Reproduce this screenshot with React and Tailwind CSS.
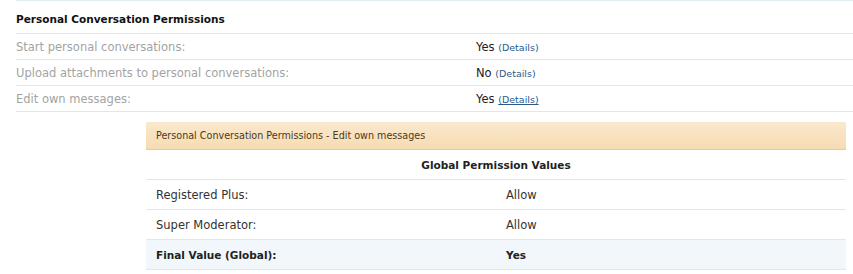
import React from 'react';

const rows = [
  { label: 'Start personal conversations:', value: 'Yes' },
  { label: 'Upload attachments to personal conversations:', value: 'No' },
  { label: 'Edit own messages:', value: 'Yes', hover: true },
];

const detailRows = [
  { label: 'Registered Plus:', value: 'Allow' },
  { label: 'Super Moderator:', value: 'Allow' },
];

export default function App() {
  return (
    <div className="w-[853px] h-[274px] bg-white overflow-hidden font-['DejaVu_Sans',sans-serif] text-[11.5px]">
      <div className="pl-4">
        <div className="border-t border-[#dfeef0] h-[1px]"></div>

        {/* Section heading */}
        <div className="h-[33px] flex items-end pb-[5px] border-b border-[#dbeaf0]">
          <span className="font-bold text-[#111] text-[10.5px]">Personal Conversation Permissions</span>
        </div>

        {/* Permission rows */}
        {rows.map((row) => (
          <div key={row.label} className="h-[26px] pt-[2px] flex items-center border-b border-[#dbeaf0]">
            <div className="w-[460px] text-[#a3a3a3]">{row.label}</div>
            <div className="text-[#222]">
              {row.value}{' '}
              <span className={`text-[9.5px] text-[#2b5a8a] ${row.hover ? 'underline' : ''}`}>(Details)</span>
            </div>
          </div>
        ))}

        {/* Detail panel */}
        <div className="ml-[130px] mr-[7px] mt-[10px]">
          <div className="h-[28px] pt-[2px] flex items-center px-[10px] bg-gradient-to-b from-[#fae9ce] to-[#f6dbb0] border-b border-[#f0c88c] text-[9.6px] text-[#4b3a22]">
            Personal Conversation Permissions - Edit own messages
          </div>
          <div className="h-[30px] pt-[3px] flex items-center justify-center border-b border-[#dbeaf0] font-bold text-[10.5px] text-[#222]">
            Global Permission Values
          </div>
          {detailRows.map((row) => (
            <div key={row.label} className="h-[30px] pt-[2px] flex items-center border-b border-[#dbeaf0] text-[#333]">
              <div className="w-[360px] pl-[10px]">{row.label}</div>
              <div>{row.value}</div>
            </div>
          ))}
          <div className="h-[30px] pt-[2px] flex items-center border-b border-[#dbeaf0] bg-[#f1f7fb] font-bold text-[10.5px] text-[#222]">
            <div className="w-[360px] pl-[10px]">Final Value (Global):</div>
            <div>Yes</div>
          </div>
        </div>
      </div>
    </div>
  );
}
